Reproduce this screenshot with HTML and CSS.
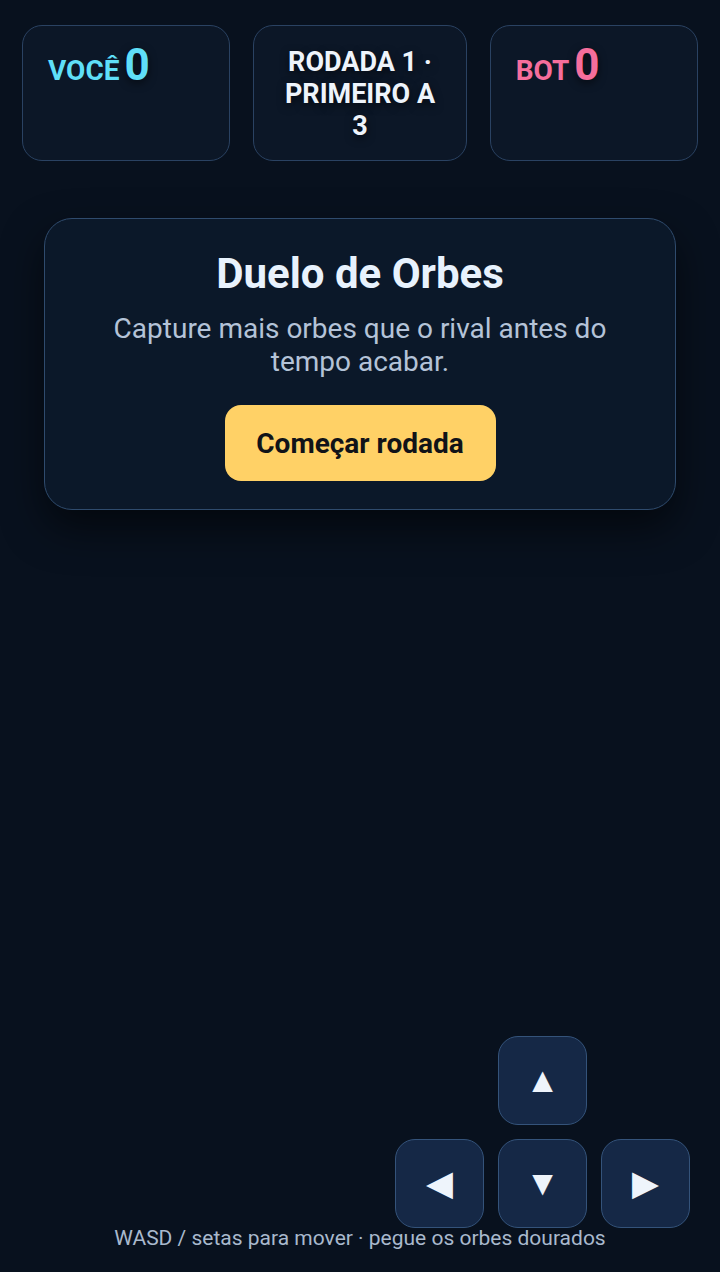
FILE: index.html
```html
<!DOCTYPE html>
<html lang="pt-BR">
  <head>
    <meta charset="utf-8">
    <title>Duelo de Orbes</title>
    <meta name="viewport" content="width=device-width, initial-scale=1.0">
    <link rel="stylesheet" href="styles.css">
  </head>
  <body>
    <div id="hud">
      <div class="card score you">
        <span class="label">Você</span>
        <span class="value">0</span>
      </div>
      <div class="card round">Rodada 1 · Primeiro a 3</div>
      <div class="card score bot">
        <span class="label">Bot</span>
        <span class="value">0</span>
      </div>
    </div>

    <div id="overlay">
      <h1>Duelo de Orbes</h1>
      <p>Capture mais orbes que o rival antes do tempo acabar.</p>
      <button id="start">Começar rodada</button>
    </div>

    <div id="arena"></div>

    <div id="hint">WASD / setas para mover · pegue os orbes dourados</div>

    <div id="dpad">
      <div class="key up">▲</div>
      <div class="key left">◀</div>
      <div class="key down">▼</div>
      <div class="key right">▶</div>
    </div>
  </body>
</html>
```

FILE: styles.css
```css
html, body {
  margin: 0;
  padding: 0;
  height: 100%;
  background: #08111e;
  color: #eef4fb;

  font-family: Roboto, "Noto Sans", sans-serif;
}

body {
  display: flex;
  flex-direction: column;
  box-sizing: border-box;
  padding: 25px 22px 22px 22px;
  position: relative;
}

#hud {
  display: grid;
  grid-template-columns: 208fr 213fr 208fr;
  gap: 23px;
}

.card {
  background: #0c1727;
  border: 1px solid #2a4262;
  border-radius: 20px;
}

.score {
  display: flex;
  align-items: baseline;
  gap: 5px;
  padding: 17px 20px 0 25px;
}

.score .label {
  font-size: 28px;
  font-weight: bold;
  text-transform: uppercase;
}

.score .value {
  font-size: 44px;
  font-weight: bold;
  line-height: 44px;
  text-shadow: 0 3px 8px rgba(0, 0, 0, 0.6);
}

.you { color: #5fdff8; }
.bot { color: #f56e9c; }

.round {
  text-align: center;
  text-transform: uppercase;
  font-size: 27px;
  font-weight: bold;
  line-height: 32px;
  padding: 20px 23px 18px 23px;
  text-shadow: 0 3px 8px rgba(0, 0, 0, 0.6);
}

#overlay {
  margin: 57px 22px 0 22px;
  background: #0b1829;
  border: 1px solid #2f4b6d;
  border-radius: 28px;
  padding: 30px 30px 28px 30px;
  text-align: center;
  box-shadow: 0 18px 40px rgba(0, 0, 0, 0.55);
}

#overlay h1 {
  margin: 0;
  font-size: 42px;
  line-height: 50px;
  color: #e8f2fd;
}

#overlay p {
  margin: 13px 20px 27px 20px;
  font-size: 28px;
  line-height: 33px;
  color: #b4c3d8;
}

#start {
  font-family: inherit;
  font-size: 28px;
  font-weight: bold;
  color: #111318;
  background: #ffd166;
  border: none;
  border-radius: 16px;
  width: 271px;
  height: 76px;
  cursor: pointer;
}

#arena {
  flex: 1;
}

#hint {
  text-align: center;
  font-size: 21px;
  color: #a9b9cd;
}

#dpad {
  position: absolute;
  right: 30px;
  bottom: 44px;
  display: grid;
  grid-template-columns: repeat(3, 89px);
  grid-template-rows: 89px 89px;
  gap: 14px;
}

.key {
  background: #152846;
  border: 1px solid #34537a;
  border-radius: 20px;
  display: flex;
  align-items: center;
  justify-content: center;
  font-size: 35px;
  color: #eef4fb;
}

.up { grid-column: 2; grid-row: 1; }
.left { grid-column: 1; grid-row: 2; }
.down { grid-column: 2; grid-row: 2; }
.right { grid-column: 3; grid-row: 2; }
```
